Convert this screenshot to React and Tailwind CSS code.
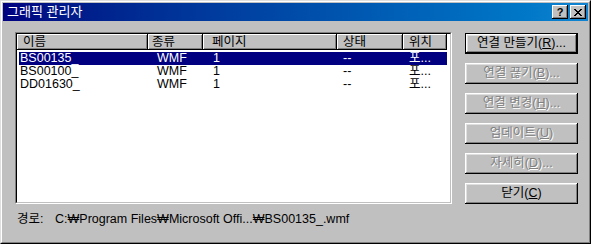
import React from 'react';

const FONT = "font-['Liberation_Sans','Noto_Sans_CJK_KR',sans-serif]";

const COLS = [
  { label: '이름', w: 'w-[131px]', hp: 'pl-[6px]' },
  { label: '종류', w: 'w-[55px]', hp: 'pl-[4px]' },
  { label: '페이지', w: 'w-[134px]', hp: 'pl-[9px]' },
  { label: '상태', w: 'w-[66px]', hp: 'pl-[6px]' },
  { label: '위치', w: 'w-[44px]', hp: 'pl-[6px]' },
];

const ROWS = [
  ['BS00135_', 'WMF', '1', '--', '포...'],
  ['BS00100_', 'WMF', '1', '--', '포...'],
  ['DD01630_', 'WMF', '1', '--', '포...'],
];

// cell widths/paddings for the body rows (row starts 2px in from the list edge)
const CELL = [
  'w-[129px] pl-[1px]',
  'w-[55px] pl-[9px]',
  'w-[134px] pl-[10px]',
  'w-[66px] pl-[6px]',
  'w-[44px] pl-[6px]',
];

const BUTTONS = [
  { pre: '연결 만들기(', key: 'R', post: ')...', enabled: true, isDefault: true },
  { pre: '연결 끊기(', key: 'B', post: ')...' },
  { pre: '연결 변경(', key: 'H', post: ')...' },
  { pre: '업데이트(', key: 'U', post: ')' },
  { pre: '자세히(', key: 'D', post: ')...' },
  { pre: '닫기(', key: 'C', post: ')', enabled: true },
];

function TitleButton({ children }) {
  return (
    <div className="w-[16px] h-[14px] bg-[#c0c0c0] flex items-center justify-center shadow-[inset_-1px_-1px_#000,inset_1px_1px_#fff,inset_-2px_-2px_#808080]">
      {children}
    </div>
  );
}

function DialogButton({ pre, k, post, enabled, isDefault }) {
  const face = (
    <div className="h-full w-full bg-[#c0c0c0] flex items-center justify-center shadow-[inset_-1px_-1px_#000,inset_1px_1px_#fff,inset_-2px_-2px_#808080,inset_2px_2px_#dfdfdf]">
      <span
        className={
          enabled
            ? 'text-black text-[12.5px] leading-[13px]'
            : 'text-[#808080] text-[12.5px] leading-[13px] [text-shadow:1px_1px_0_#fff]'
        }
      >
        {pre}
        <u>{k}</u>
        {post}
      </span>
    </div>
  );
  if (isDefault) {
    return <div className="h-[21px] w-[113px] border border-black">{face}</div>;
  }
  return <div className="h-[21px] w-[113px]">{face}</div>;
}

export default function App() {
  return (
    <div className={`w-[591px] h-[244px] bg-[#c0c0c0] border border-t-[#dfdfdf] border-l-[#dfdfdf] border-r-black border-b-black ${FONT}`}>
      <div className="h-full border border-t-white border-l-white border-r-[#808080] border-b-[#808080] p-px flex flex-col">
        {/* TITLE BAR */}
        <div className="h-[18px] bg-linear-to-r from-[#000080] to-[#1084d0] flex items-center pl-[4px] pr-[2px]">
          <span className="text-white text-[13px] leading-[14px] flex-1">그래픽 관리자</span>
          <div className="flex gap-[2px]">
            <TitleButton>
              <span className="text-black text-[11px] font-bold leading-none mt-px">?</span>
            </TitleButton>
            <TitleButton>
              <svg width="8" height="7" viewBox="0 0 8 7" shapeRendering="crispEdges">
                <path d="M0 0h2v1h-2zM6 0h2v1h-2zM1 1h2v1h-2zM5 1h2v1h-2zM2 2h4v1h-4zM3 3h2v1h-2zM2 4h4v1h-4zM1 5h2v1h-2zM5 5h2v1h-2zM0 6h2v1h-2zM6 6h2v1h-2z" fill="#000" />
              </svg>
            </TitleButton>
          </div>
        </div>

        {/* BODY */}
        <div className="flex-1 flex flex-col pl-[12px] pt-[11px]">
          <div className="flex">
            {/* LIST */}
            <div className="w-[437px] h-[172px] border border-t-[#808080] border-l-[#808080] border-r-white border-b-white">
              <div className="h-full border border-t-black border-l-black border-r-[#c0c0c0] border-b-[#c0c0c0] bg-white">
                <div className="flex h-[16px]">
                  {COLS.map((c) => (
                    <div
                      key={c.label}
                      className={`${c.w} ${c.hp} h-full bg-[#c0c0c0] text-black text-[12.5px] leading-[16px] shadow-[inset_-1px_-1px_#000,inset_1px_1px_#fff,inset_-2px_-2px_#808080]`}
                    >
                      {c.label}
                    </div>
                  ))}
                </div>
                <div className="mt-[2px] pl-[2px]">
                  {ROWS.map((r, i) => (
                    <div
                      key={i}
                      className={`flex w-[428px] h-[13px] text-[12.5px] leading-[13px] whitespace-nowrap ${i === 0 ? 'bg-[#000080] text-white' : 'text-black'}`}
                    >
                      {r.map((v, j) => (
                        <div key={j} className={CELL[j]}>
                          {v}
                        </div>
                      ))}
                    </div>
                  ))}
                </div>
              </div>
            </div>

            {/* BUTTONS */}
            <div className="ml-[13px] pt-px flex flex-col gap-[9px]">
              {BUTTONS.map((b) => (
                <DialogButton key={b.key} pre={b.pre} k={b.key} post={b.post} enabled={b.enabled} isDefault={b.isDefault} />
              ))}
            </div>
          </div>

          {/* PATH */}
          <div className="mt-[9px] h-[13px] flex pl-[2px] text-black text-[12.5px] leading-[13px] whitespace-nowrap">
            <span className="w-[38px]">경로:</span>
            <span>C:₩Program Files₩Microsoft Offi...₩BS00135_.wmf</span>
          </div>
        </div>
      </div>
    </div>
  );
}
